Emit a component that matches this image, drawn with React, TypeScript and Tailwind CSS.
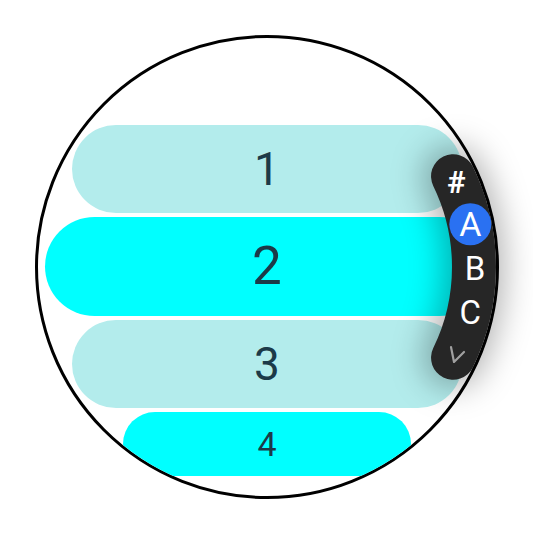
import React from "react";

type Row = {
  label: string;
  w: string;
  h: string;
  text: string;
  bg: string;
};

const rows: Row[] = [
  { label: "1", w: "w-[390px]", h: "h-[88px]", text: "text-[46px]", bg: "bg-[#b3ecec]" },
  { label: "2", w: "w-[444px]", h: "h-[99px]", text: "text-[53px]", bg: "bg-[#00ffff]" },
  { label: "3", w: "w-[390px]", h: "h-[88px]", text: "text-[46px]", bg: "bg-[#b3ecec]" },
  { label: "4", w: "w-[288px]", h: "h-[64px]", text: "text-[34px]", bg: "bg-[#00ffff]" },
];

// arc helpers, centre of the watch face in page coords
const CX = 267;
const CY = 267;
const pt = (r: number, deg: number) => {
  const a = (deg * Math.PI) / 180;
  return [CX + r * Math.cos(a), CY + r * Math.sin(a)];
};

const IndexBar = () => {
  const R = 207;
  const [x1, y1] = pt(R, -26);
  const [x2, y2] = pt(R, 26);
  const arc = `M${x1},${y1} A${R},${R} 0 0 1 ${x2},${y2}`;
  const letters = [
    { t: "#", deg: -24.5, size: 31, weight: 700 },
    { t: "A", deg: -12.2, size: 34, weight: 400 },
    { t: "B", deg: 0, size: 33, weight: 400 },
    { t: "C", deg: 12.3, size: 33, weight: 400 },
  ];
  const [ax, ay] = pt(R, -12.2);

  return (
    <svg
      className="absolute left-0 top-0 pointer-events-none"
      width="533"
      height="542"
      viewBox="0 0 533 542"
    >
      <defs>
        <filter
          id="barShadow"
          filterUnits="userSpaceOnUse"
          x="0"
          y="0"
          width="533"
          height="542"
        >
          <feGaussianBlur stdDeviation="16" />
        </filter>
      </defs>
      <path
        d={arc}
        stroke="#000"
        strokeOpacity="0.3"
        strokeWidth="60"
        strokeLinecap="round"
        fill="none"
        filter="url(#barShadow)"
      />
      <path d={arc} stroke="#262626" strokeWidth="44" strokeLinecap="round" fill="none" />
      <circle cx={ax + 1} cy={ay + 1} r="21" fill="#2a71f2" />
      {letters.map((l) => {
        const [x, y] = pt(R, l.deg);
        return (
          <text
            key={l.t}
            x={x + 1}
            y={y + 1}
            fill="#ffffff"
            fontSize={l.size}
            fontWeight={l.weight}
            fontFamily="Roboto, 'Liberation Sans', sans-serif"
            textAnchor="middle"
            dominantBaseline="central"
          >
            {l.t}
          </text>
        );
      })}
      {/* collapse chevron */}
      <path
        d="M451,347 L454,362 L464,352"
        stroke="#a0a0a0"
        strokeWidth="2.2"
        strokeLinecap="round"
        strokeLinejoin="round"
        fill="none"
      />
    </svg>
  );
};

export default function App() {
  return (
    <div className="relative w-[533px] h-[542px] bg-white">
      <div className="ml-[35px] pt-[35px]">
        <div className="w-[464px] h-[464px] rounded-full border-[3px] border-black overflow-hidden">
          <div className="flex flex-col items-center gap-[4px] pt-[87px]">
            {rows.map((r) => (
              <div
                key={r.label}
                className={`${r.w} ${r.h} ${r.bg} shrink-0 rounded-full flex items-center justify-center`}
              >
                <span
                  className={`${r.text} text-[#1c3a48] leading-none font-[Roboto,'Liberation_Sans',sans-serif]`}
                >
                  {r.label}
                </span>
              </div>
            ))}
          </div>
        </div>
      </div>
      <IndexBar />
    </div>
  );
}
